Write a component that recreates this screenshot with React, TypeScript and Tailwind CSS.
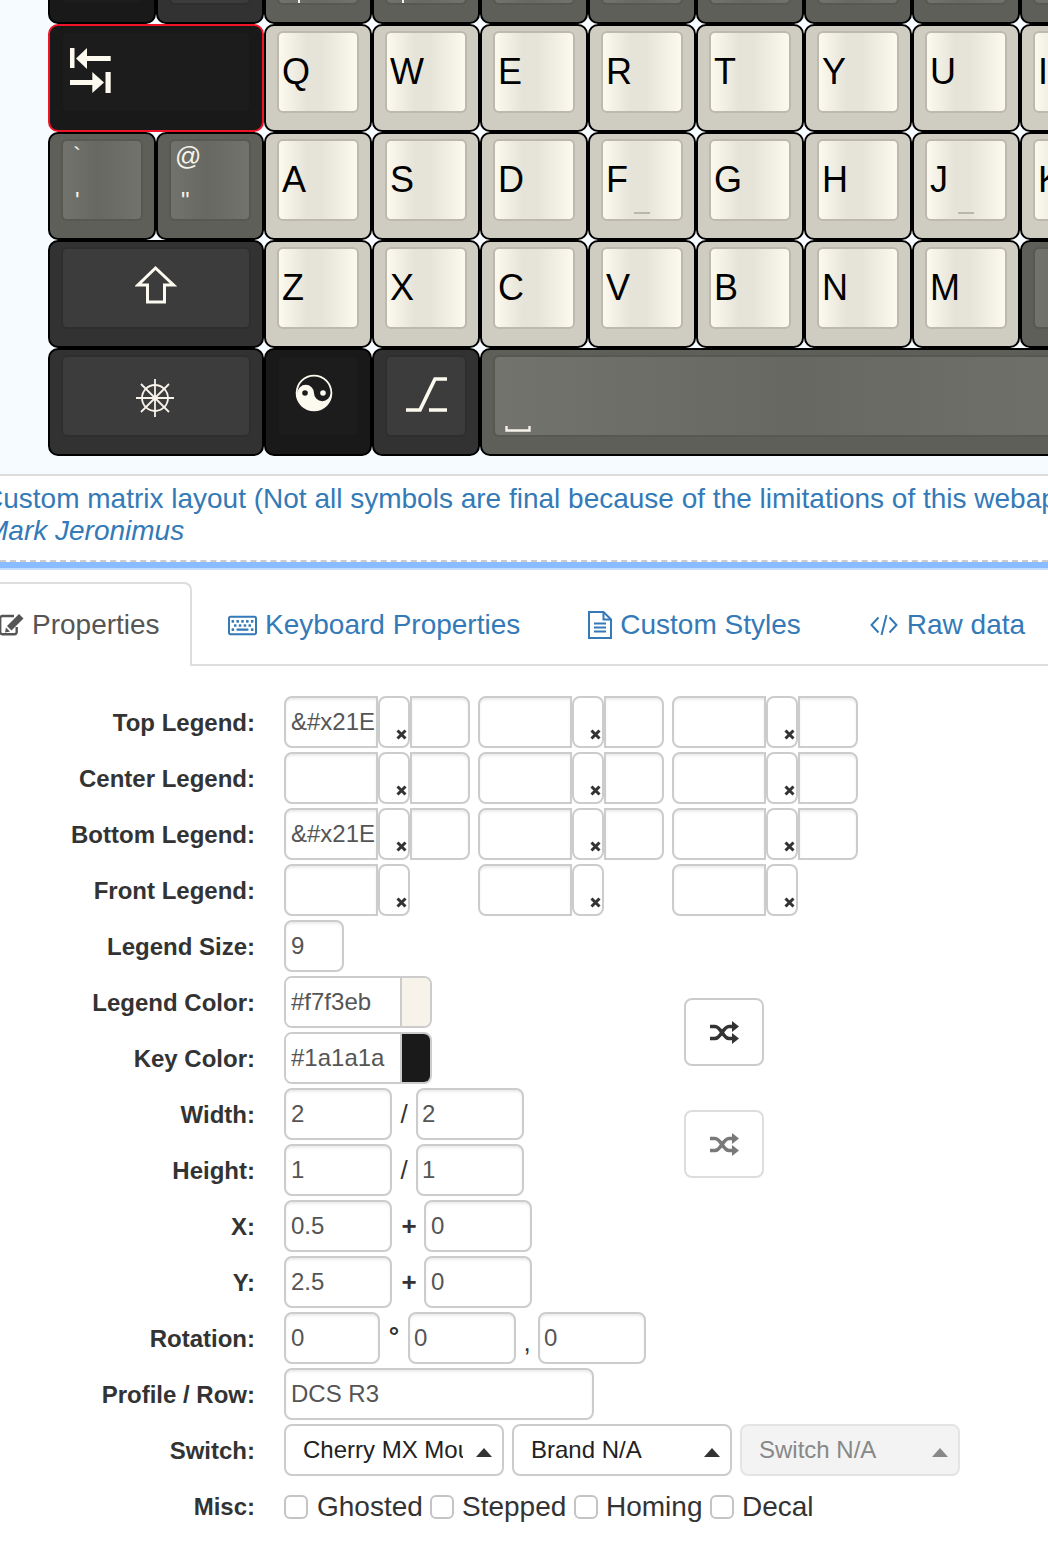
import { ReactNode } from 'react';
import { FaRegKeyboard } from 'react-icons/fa';

type Tone = 'cream' | 'grey' | 'charcoal' | 'black';

const toneOuter: Record<Tone, string> = {
  cream: 'bg-[#cfccc1]',
  grey: 'bg-[#5e5f58]',
  charcoal: 'bg-[#333232]',
  black: 'bg-[#191919]',
};

const toneInner: Record<Tone, string> = {
  cream: 'border-[#bdb9ac] bg-[linear-gradient(90deg,#fcfaee,#e6e4d9_35%,#e6e4d9_55%,#fcfaee)] text-black',
  grey: 'border-[#575852] bg-[linear-gradient(90deg,#72736d,#676862_45%,#72736d)] text-[#f7f3eb]',
  charcoal: 'border-[#2f2e2e] bg-[#3d3c3c] text-[#f7f3eb]',
  black: 'border-[#191919] bg-[#1c1c1c] text-[#f7f3eb]',
};

const Key = ({
  tone,
  size = 1,
  selected,
  children,
}: {
  tone: Tone;
  size?: 1 | 2 | 6;
  selected?: boolean;
  children?: ReactNode;
}) => (
  <div
    className={`box-border h-[108px] shrink-0 rounded-[10px] border-2 pl-[11px] pt-[5px] ${toneOuter[tone]} ${
      selected ? 'border-[#f01428]' : 'border-black'
    } ${size === 1 ? 'w-[108px]' : size === 2 ? 'w-[216px]' : 'w-[700px]'}`}
  >
    <div
      className={`box-border h-[82px] overflow-hidden rounded-[6px] border-2 ${toneInner[tone]} ${
        size === 1 ? 'w-[82px]' : size === 2 ? 'w-[190px]' : 'w-[674px]'
      }`}
    >
      {children}
    </div>
  </div>
);

const Letter = ({ char, homing }: { char: string; homing?: boolean }) => (
  <Key tone="cream">
    <div className="mt-[21px] pl-[3px] text-[36px] leading-[36px]">{char}</div>
    {homing && <div className="mx-auto mt-[14px] h-[2px] w-[16px] bg-[#b9b6aa]" />}
  </Key>
);

const TabIcon = () => (
  <svg width="44" height="50" viewBox="0 0 44 50" className="ml-[5px] mt-[13px] fill-[#fcfaee]">
    <rect x="2" y="2" width="4.5" height="20" />
    <polygon points="8,12.5 19,2 19,23" />
    <rect x="18" y="10" width="24.7" height="5" />
    <rect x="2" y="34" width="23" height="5" />
    <polygon points="36,36.5 24.3,26 24.3,47" />
    <rect x="37.5" y="26" width="5.2" height="21" />
  </svg>
);

const ShiftIcon = () => (
  <svg width="42" height="40" viewBox="0 0 42 40" className="ml-[72px] mt-[16px]">
    <polygon
      points="20.5,3 3,20 12.5,20 12.5,37 29.5,37 29.5,20 38.5,20"
      fill="none"
      stroke="#fcfaee"
      strokeWidth="3"
    />
  </svg>
);

const HelmIcon = () => (
  <svg width="40" height="40" viewBox="-20 -20 40 40" className="ml-[72px] mt-[21px]" stroke="#f7f3eb" fill="none">
    <circle r="13" strokeWidth="1.8" />
    <path d="M0 -19V19M-19 0H19M-14 -14L14 14M-14 14L14 -14" strokeWidth="1.8" />
    <circle r="2.5" fill="#f7f3eb" stroke="none" />
  </svg>
);

const YinYangIcon = () => (
  <svg width="38" height="38" viewBox="-19 -19 38 38" className="ml-[16px] mt-[17px]">
    <circle r="18.3" fill="#fcfaee" />
    <path d="M-16.5 0A8.25 8.25 0 0 1 0 0A8.25 8.25 0 0 0 16.5 0A16.5 16.5 0 0 0 -16.5 0Z" fill="#1c1c1c" />
    <circle cx="-9" cy="0" r="2.8" fill="#1c1c1c" />
    <circle cx="9" cy="0" r="2.8" fill="#fcfaee" />
  </svg>
);

const SlopeIcon = () => (
  <svg width="46" height="40" viewBox="0 0 46 40" className="ml-[17px] mt-[17px]" fill="none" stroke="#fcfaee" strokeWidth="3.6">
    <path d="M2 36H16L31 5H43" />
    <path d="M25 36H43" />
  </svg>
);

const SpaceIcon = () => (
  <svg width="26" height="8" viewBox="0 0 26 8" className="ml-[10px] mt-[68px]" fill="none" stroke="#f7f3eb" strokeWidth="2.4">
    <path d="M1.5 1V5.5H24.5V1" />
  </svg>
);

const EditIcon = () => (
  <svg width="25" height="25" viewBox="0 0 25 25" className="shrink-0">
    <path d="M15 3H3.5A2.2 2.2 0 0 0 1.2 5.2V19A2.2 2.2 0 0 0 3.5 21.2H15.5A2.2 2.2 0 0 0 17.7 19V14" fill="none" stroke="#555" strokeWidth="2.4" />
    <polygon points="20,1 24.5,5.5 12.5,17.5 8,13" fill="#555" />
    <polygon points="7,14.5 11,18.5 6,19.5" fill="#555" />
  </svg>
);

const CodeIcon = () => (
  <svg width="28" height="22" viewBox="0 0 28 22" fill="none" stroke="#337ab7" strokeWidth="2">
    <path d="M8.5 3.5L1.5 11L8.5 18.5M19.5 3.5L26.5 11L19.5 18.5M16.5 1L11.5 21" />
  </svg>
);

const FileIcon = () => (
  <svg width="24" height="28" viewBox="0 0 24 28" fill="none" stroke="#337ab7" strokeWidth="2">
    <path d="M1 1H15.5L23 8.5V27H1Z" />
    <path d="M15.5 1V8.5H23" />
    <path d="M6 12.5H18M6 16.5H18M6 20.5H18" />
  </svg>
);

const ShuffleIcon = () => (
  <svg width="29" height="23" viewBox="0 0 29 23" fill="none" stroke="#333" strokeWidth="3.6">
    <path d="M0 5.5H5C11 5.5 13 17.5 19 17.5H23" />
    <path d="M0 17.5H5C11 17.5 13 5.5 19 5.5H23" />
    <polygon points="22,0 29,5.5 22,11" fill="#333" stroke="none" />
    <polygon points="22,12 29,17.5 22,23" fill="#333" stroke="none" />
  </svg>
);

const inputClass =
  'box-border h-[52px] border-2 border-[#ccc] bg-white px-[5px] text-[24px] text-[#555] shadow-[inset_0_2px_2px_rgba(0,0,0,0.075)] outline-none';

const TextBox = ({ value = '', className = '' }: { value?: string; className?: string }) => (
  <input readOnly value={value} className={`${inputClass} ${className}`} />
);

const Row = ({ label, children }: { label: string; children?: ReactNode }) => (
  <div className="flex h-[52px] items-center">
    <label className="mr-[29px] mt-[2px] w-[255px] shrink-0 text-right text-[24px] font-bold text-[#333]">{label}</label>
    {children}
  </div>
);

const LegendGroup = ({ value, short }: { value?: string; short?: boolean }) => (
  <div className="mr-[8px] flex w-[186px]">
    <TextBox value={value} className="w-[94px] rounded-l-[8px] pr-0" />
    <div className="box-border flex h-[52px] w-[32px] items-end justify-end rounded-[8px] border-2 border-[#ccc] pb-[6px] pr-[1px]">
      <svg width="11" height="11" viewBox="0 0 11 11" stroke="#333" strokeWidth="3">
        <path d="M1.5 1.5L9.5 9.5M9.5 1.5L1.5 9.5" />
      </svg>
    </div>
    {!short && <TextBox className="w-[60px] rounded-r-[8px]" />}
  </div>
);

const LegendRow = ({ label, value, short }: { label: string; value?: string; short?: boolean }) => (
  <Row label={label}>
    <LegendGroup value={value} short={short} />
    <LegendGroup short={short} />
    <LegendGroup short={short} />
  </Row>
);

const ColorBox = ({ value, swatch }: { value: string; swatch: string }) => (
  <div className="box-border flex h-[52px] w-[148px] overflow-hidden rounded-[8px] border-2 border-[#ccc]">
    <input readOnly value={value} className="w-[114px] bg-white px-[5px] text-[24px] text-[#555] outline-none" />
    <div className={`flex-1 border-l-2 border-[#ccc] ${swatch}`} />
  </div>
);

const Sep = ({ children, className }: { children: ReactNode; className: string }) => (
  <span className={`shrink-0 text-center text-[26px] text-[#333] ${className}`}>{children}</span>
);

const Select = ({ text, disabled }: { text: string; disabled?: boolean }) => (
  <div
    className={`mr-[8px] box-border flex h-[52px] w-[220px] items-center rounded-[8px] border-2 pl-[17px] text-[24px] ${
      disabled ? 'border-[#e4e4e4] bg-[#f3f3f3] text-[#888]' : 'border-[#ccc] bg-white text-[#222]'
    }`}
  >
    <span className="w-[160px] overflow-hidden whitespace-nowrap">{text}</span>
    <span
      className={`ml-[13px] mt-[4px] h-0 w-0 border-x-[8px] border-b-[9px] border-x-transparent ${
        disabled ? 'border-b-[#888]' : 'border-b-[#333]'
      }`}
    />
  </div>
);

const Check = ({ label, className, labelClass }: { label: string; className: string; labelClass: string }) => (
  <div className={`mt-[2px] flex items-center ${className}`}>
    <span className="box-border h-[24px] w-[24px] shrink-0 rounded-[6px] border-2 border-[#c4c4c4] bg-white" />
    <span className={`text-[28px] text-[#333] ${labelClass}`}>{label}</span>
  </div>
);

const ShuffleButton = ({ disabled }: { disabled?: boolean }) => (
  <button
    className={`box-border flex h-[68px] w-[80px] items-center justify-center rounded-[8px] border-2 border-[#ccc] ${
      disabled ? 'opacity-65' : ''
    }`}
  >
    <ShuffleIcon />
  </button>
);

export default function App() {
  return (
    <div className="h-[1548px] w-[1048px] overflow-hidden bg-white font-['Liberation_Sans',Arial,sans-serif]">
      <section className="box-border h-[474px] bg-[#f6fbff] pl-[48px]">
        <div className="flex h-[24px] items-end">
          <Key tone="black" />
          <Key tone="charcoal" size={1} />
          <Key tone="grey">
            <div className="ml-[19px] mt-[75px] h-[3px] w-[2px] bg-[#f7f3eb]" />
          </Key>
          <Key tone="grey">
            <div className="ml-[15px] mt-[75px] h-[3px] w-[2px] bg-[#f7f3eb]" />
          </Key>
          <Key tone="grey" />
          <Key tone="grey" />
          <Key tone="grey" />
          <Key tone="grey" />
          <Key tone="grey" />
          <Key tone="grey" />
        </div>

        <div className="flex h-[108px]">
          <Key tone="black" size={2} selected>
            <TabIcon />
          </Key>
          {['Q', 'W', 'E', 'R', 'T', 'Y', 'U', 'I'].map((c) => (
            <Letter key={c} char={c} />
          ))}
        </div>

        <div className="flex h-[108px]">
          <Key tone="grey">
            <div className="ml-[10px] mt-px text-[24px] leading-[28px]">`</div>
            <div className="ml-[12px] mt-[17px] text-[24px] leading-[28px]">'</div>
          </Key>
          <Key tone="grey">
            <div className="ml-[4px] mt-px text-[26px] leading-[28px]">@</div>
            <div className="ml-[10px] mt-[17px] text-[24px] leading-[28px]">"</div>
          </Key>
          {['A', 'S', 'D', 'F', 'G', 'H', 'J', 'K'].map((c) => (
            <Letter key={c} char={c} homing={c === 'F' || c === 'J'} />
          ))}
        </div>

        <div className="flex h-[108px]">
          <Key tone="charcoal" size={2}>
            <ShiftIcon />
          </Key>
          {['Z', 'X', 'C', 'V', 'B', 'N', 'M'].map((c) => (
            <Letter key={c} char={c} />
          ))}
          <Key tone="grey" />
        </div>

        <div className="flex h-[108px]">
          <Key tone="charcoal" size={2}>
            <HelmIcon />
          </Key>
          <Key tone="black">
            <YinYangIcon />
          </Key>
          <Key tone="charcoal">
            <SlopeIcon />
          </Key>
          <Key tone="grey" size={6}>
            <SpaceIcon />
          </Key>
        </div>
      </section>

      <div className="box-border h-[86px] whitespace-nowrap border-t-2 border-[#ddd] pt-[7px] text-[28px] leading-[32px] text-[#337ab7]">
        <p className="-ml-[17px]">Custom matrix layout (Not all symbols are final because of the limitations of this webapp)</p>
        <p className="-ml-[15px] italic">Mark Jeronimus</p>
      </div>

      <div className="border-t-2 border-dashed border-[#ccc]" />
      <div className="h-[6px] bg-[#8abbff]" />
      <div className="h-[2px] bg-[#c4ddff]" />

      <nav className="mt-[12px] flex h-[84px] border-b-2 border-[#ddd] text-[28px] text-[#337ab7]">
        <div className="-mb-[2px] -ml-[40px] box-border flex h-[84px] w-[232px] items-center rounded-tr-[8px] border-r-2 border-t-2 border-[#ddd] bg-white pl-[39px] text-[#555]">
          <EditIcon />
          <span className="ml-[8px]">Properties</span>
        </div>
        <div className="ml-[36px] flex items-center pt-[4px]">
          <FaRegKeyboard size={29} />
          <span className="ml-[8px]">Keyboard Properties</span>
        </div>
        <div className="ml-[68px] flex items-center pt-[4px]">
          <FileIcon />
          <span className="ml-[8px]">Custom Styles</span>
        </div>
        <div className="ml-[69px] flex items-center pt-[4px]">
          <CodeIcon />
          <span className="ml-[9px]">Raw data</span>
        </div>
      </nav>

      <form className="mt-[30px] flex flex-col gap-[4px]">
        <LegendRow label="Top Legend:" value="&#x21E" />
        <LegendRow label="Center Legend:" />
        <LegendRow label="Bottom Legend:" value="&#x21E" />
        <LegendRow label="Front Legend:" short />
        <Row label="Legend Size:">
          <TextBox value="9" className="w-[60px] rounded-[8px]" />
        </Row>

        <div className="flex">
          <div className="flex w-[684px] shrink-0 flex-col gap-[4px]">
            <Row label="Legend Color:">
              <ColorBox value="#f7f3eb" swatch="bg-[#f7f3eb]" />
            </Row>
            <Row label="Key Color:">
              <ColorBox value="#1a1a1a" swatch="bg-[#1a1a1a]" />
            </Row>
            <Row label="Width:">
              <TextBox value="2" className="w-[108px] rounded-[8px]" />
              <Sep className="w-[24px]">/</Sep>
              <TextBox value="2" className="w-[108px] rounded-[8px] pl-[4px]" />
            </Row>
            <Row label="Height:">
              <TextBox value="1" className="w-[108px] rounded-[8px]" />
              <Sep className="w-[24px]">/</Sep>
              <TextBox value="1" className="w-[108px] rounded-[8px] pl-[4px]" />
            </Row>
          </div>
          <div className="flex flex-col gap-[44px] pt-[22px]">
            <ShuffleButton />
            <ShuffleButton disabled />
          </div>
        </div>

        <Row label="X:">
          <TextBox value="0.5" className="w-[108px] rounded-[8px]" />
          <Sep className="w-[34px] font-bold">+</Sep>
          <TextBox value="0" className="-ml-[2px] w-[108px] rounded-[8px]" />
        </Row>
        <Row label="Y:">
          <TextBox value="2.5" className="w-[108px] rounded-[8px]" />
          <Sep className="w-[34px] font-bold">+</Sep>
          <TextBox value="0" className="-ml-[2px] w-[108px] rounded-[8px]" />
        </Row>
        <Row label="Rotation:">
          <TextBox value="0" className="w-[96px] rounded-[8px]" />
          <Sep className="mb-[4px] w-[28px] font-bold">°</Sep>
          <TextBox value="0" className="w-[108px] rounded-[8px] pl-[4px]" />
          <Sep className="mt-[8px] w-[22px]">,</Sep>
          <TextBox value="0" className="w-[108px] rounded-[8px] pl-[4px]" />
        </Row>
        <Row label="Profile / Row:">
          <TextBox value="DCS R3" className="w-[310px] rounded-[8px]" />
        </Row>
        <Row label="Switch:">
          <Select text="Cherry MX Mount" />
          <Select text="Brand N/A" />
          <Select text="Switch N/A" disabled />
        </Row>
        <Row label="Misc:">
          <Check label="Ghosted" className="w-[146px]" labelClass="ml-[9px]" />
          <Check label="Stepped" className="w-[144px]" labelClass="ml-[8px]" />
          <Check label="Homing" className="w-[136px]" labelClass="ml-[8px]" />
          <Check label="Decal" className="" labelClass="ml-[8px]" />
        </Row>
      </form>
    </div>
  );
}
